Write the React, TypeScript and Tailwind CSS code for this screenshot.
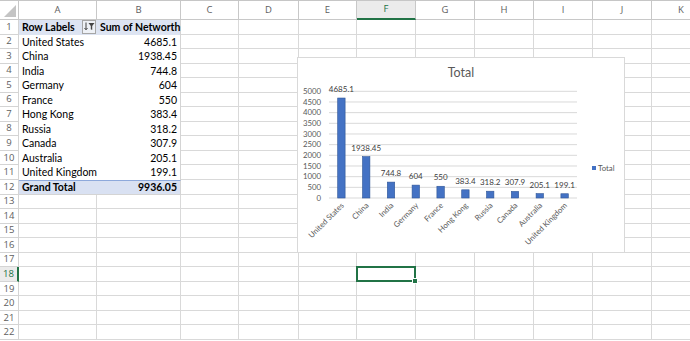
import React from 'react'

const cols = ['A', 'B', 'C', 'D', 'E', 'F', 'G', 'H', 'I', 'J', 'K']

const data: [string, number, string][] = [
  ['United States', 4685.1, '4685.1'],
  ['China', 1938.45, '1938.45'],
  ['India', 744.8, '744.8'],
  ['Germany', 604, '604'],
  ['France', 550, '550'],
  ['Hong Kong', 383.4, '383.4'],
  ['Russia', 318.2, '318.2'],
  ['Canada', 307.9, '307.9'],
  ['Australia', 205.1, '205.1'],
  ['United Kingdom', 199.1, '199.1'],
]

const cellFont = { fontFamily: 'Lato, "Liberation Sans", sans-serif' }
const headFont = { fontFamily: '"Open Sans", "Noto Sans", sans-serif' }

function FilterButton() {
  return (
    <div className="ml-auto mr-[1px] self-stretch mb-[1px] w-[14px] border border-[#a6a6a6] bg-[#eef1f6] flex items-center justify-center">
      <svg width="11" height="9" viewBox="0 0 11 9">
        <path d="M2 0.5v7M0.5 6l1.5 1.8L3.5 6" stroke="#444" strokeWidth="1" fill="none" />
        <path d="M4.5 1h6L8.2 4v4L6.8 7.3V4z" fill="#444" />
      </svg>
    </div>
  )
}

// floating chart object over the sheet
function Chart() {
  const x0 = 31
  const x1 = 279
  const yTop = 33.3
  const yBot = 140
  const step = (yBot - yTop) / 10
  const cw = (x1 - x0) / data.length
  const font = 'Lato, "Liberation Sans", sans-serif'
  return (
    <div className="absolute left-[297px] top-[56px] w-[328px] h-[196px] bg-white border border-[#d9d9d9] flex flex-col items-center">
      <div className="pt-[7px] text-[12.5px] leading-[16px] text-[#595959]" style={{ fontFamily: font }}>
        Total
      </div>
      <svg width="328" height="196" className="absolute left-0 top-0">
        {Array.from({ length: 11 }).map((_, i) => {
          const y = yBot - i * step
          return (
            <g key={i}>
              <line x1={x0} x2={x1} y1={y} y2={y} stroke="#d9d9d9" strokeWidth="1" />
              <text x={23} y={y + 2.8} textAnchor="end" fontSize="7.8" fill="#595959" fontFamily={font}>
                {i * 500}
              </text>
            </g>
          )
        })}
        {data.map(([name, v, label], i) => {
          const cx = x0 + cw * (i + 0.5)
          const h = (v / 5000) * (yBot - yTop)
          return (
            <g key={name}>
              <rect x={cx - 3.7} y={yBot - h} width={7.4} height={h} fill="#4472c4" stroke="#2f5597" strokeWidth="0.6" />
              <text x={cx} y={yBot - h - 6} textAnchor="middle" fontSize="8" fill="#404040" fontFamily={font}>
                {label}
              </text>
              <text
                x={cx + 3}
                y={148}
                textAnchor="end"
                fontSize="7.8"
                fill="#595959"
                fontFamily={font}
                transform={`rotate(-45 ${cx + 3} 148)`}
              >
                {name}
              </text>
            </g>
          )
        })}
        <rect x="294" y="108" width="4" height="4" fill="#4472c4" />
        <text x="300" y="112.5" fontSize="7.8" fill="#595959" fontFamily={font}>
          Total
        </text>
      </svg>
    </div>
  )
}

export default function App() {
  const rows = Array.from({ length: 22 }, (_, i) => i + 1)
  return (
    <div className="relative w-[690px] h-[341px] overflow-hidden bg-white border-t border-[#c6c6c6]">
      <div className="grid grid-cols-[19px_78px_84px_58px_60px_58px_59px_59px_59px_59px_59px_59px] grid-rows-[19px_repeat(22,14.55px)]">
        <div className="flex items-end justify-end p-[2px] border-r border-b border-[#c8c8c8] bg-white">
          <div className="w-0 h-0 border-l-[12px] border-l-transparent border-b-[12px] border-b-[#c4c4c4]" />
        </div>
        {cols.map((c) => (
          <div
            key={c}
            className={
              c === 'F'
                ? 'flex items-center justify-center border-r border-[#c8c8c8] border-b-2 border-b-[#217346] bg-[#ebebeb] text-[#217346] text-[9.5px]'
                : 'flex items-center justify-center border-r border-b border-[#c8c8c8] text-[#5e5e5e] text-[9.5px]'
            }
            style={headFont}
          >
            {c}
          </div>
        ))}
        {rows.map((r) => (
          <React.Fragment key={r}>
            <div
              className={
                r === 18
                  ? 'flex items-center justify-center border-b border-[#d4d4d4] border-r-2 border-r-[#217346] bg-[#ebebeb] text-[#217346] text-[9.5px]'
                  : 'flex items-center justify-center border-b border-r border-[#d4d4d4] text-[#5e5e5e] text-[9.5px]'
              }
              style={headFont}
            >
              {r}
            </div>
            {cols.map((c) => {
              const pivot = r <= 12 && (c === 'A' || c === 'B')
              if (pivot) {
                let cls = 'flex items-center whitespace-nowrap text-[10.5px] text-black leading-none '
                if (r === 1) cls += 'bg-[#dde4f2] font-bold '
                if (r === 12) cls += 'bg-[#d9e1f2] font-bold border-t border-t-[#8ea9db] border-b border-b-[#d4d4d4] '
                if (c === 'B') cls += 'border-r border-r-[#d4d4d4] '
                if (c === 'B' && r > 1) cls += 'justify-end pr-[3px] '
                else cls += 'pl-[3px] '
                let content: React.ReactNode = null
                if (r === 1) {
                  content =
                    c === 'A' ? (
                      <>
                        Row Labels
                        <FilterButton />
                      </>
                    ) : (
                      'Sum of Networth'
                    )
                } else if (r === 12) {
                  content = c === 'A' ? 'Grand Total' : '9936.05'
                } else {
                  const d = data[r - 2]
                  content = c === 'A' ? d[0] : d[2]
                }
                return (
                  <div key={c} className={cls} style={cellFont}>
                    {content}
                  </div>
                )
              }
              const selected = r === 18 && c === 'F'
              return (
                <div key={c} className="relative border-r border-b border-[#d9d9d9]">
                  {selected && (
                    <div className="absolute left-[-1px] top-[-1px] right-[-1px] bottom-[-1px] border-2 border-[#217346] z-10">
                      <div className="absolute right-[-4px] bottom-[-4px] w-[6px] h-[6px] bg-[#217346] border border-white" />
                    </div>
                  )}
                </div>
              )
            })}
          </React.Fragment>
        ))}
      </div>
      <Chart />
    </div>
  )
}
